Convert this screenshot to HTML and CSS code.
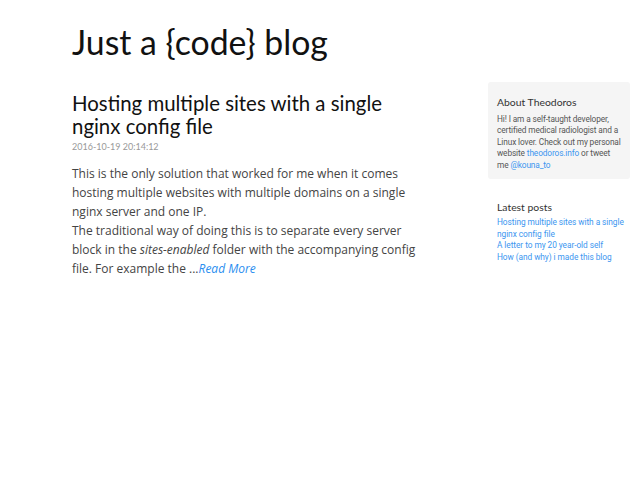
FILE: index.html
```html
<!DOCTYPE html>
<html>
<head>
<meta charset="utf-8">
<link rel="stylesheet" href="styles.css">
</head>
<body>
<div class="page">
  <header class="site-header">
    <h1 class="site-title">Just a {code} blog</h1>
  </header>
  <div class="layout">
    <main class="main">
      <article class="post">
        <h2 class="post-title">Hosting multiple sites with a single nginx config file</h2>
        <div class="post-date">2016-10-19 20:14:12</div>
        <p class="post-excerpt">This is the only solution that worked for me when it comes hosting multiple websites with multiple domains on a single nginx server and one IP.<br>The traditional way of doing this is to separate every server block in the <em>sites-enabled</em> folder with the accompanying config file. For example the ...<a class="read-more" href="#">Read More</a></p>
      </article>
    </main>
    <aside class="sidebar">
      <section class="about">
        <h4 class="side-heading">About Theodoros</h4>
        <p class="about-text">Hi! I am a self-taught developer, certified medical radiologist and a Linux lover. Check out my personal website <a href="#">theodoros.info</a> or tweet me&nbsp;<a href="#">@kouna_to</a></p>
      </section>
      <section class="latest">
        <h4 class="side-heading">Latest posts</h4>
        <ul class="latest-list">
          <li><a href="#">Hosting multiple sites with a single nginx config file</a></li>
          <li><a href="#">A letter to my 20 year-old self</a></li>
          <li><a href="#">How (and why) i made this blog</a></li>
        </ul>
      </section>
    </aside>
  </div>
</div>
</body>
</html>
```

FILE: styles.css
```css
html, body {
  margin: 0;
  padding: 0;
  background: #fff;
}
.page {
  padding: 0 10px 0 72px;
}
.site-header {
  padding-top: 20px;
}
.site-title {
  margin: 0;
  font-family: Lato, "Liberation Sans", sans-serif;
  font-weight: 400;
  font-size: 33.8px;
  line-height: 44px;
  color: #111;
}
.layout {
  display: flex;
  margin-top: 18px;
}
.main {
  width: 356px;
  flex: none;
  padding-top: 10px;
}
.post-title {
  margin: 0;
  font-family: Lato, "Liberation Sans", sans-serif;
  font-weight: 400;
  font-size: 20.4px;
  line-height: 23px;
  color: #111;
}
.post-date {
  margin-top: 3px;
  font-family: Lato, "Liberation Sans", sans-serif;
  font-size: 9px;
  line-height: 12px;
  color: #999;
}
.post-excerpt {
  margin: 11px 0 0;
  font-family: "Open Sans", "Liberation Sans", sans-serif;
  font-size: 12px;
  line-height: 19px;
  color: #444;
}
.post-excerpt em {
  font-style: italic;
}
.read-more {
  color: #2a8ef0;
  font-style: italic;
  text-decoration: none;
}
.sidebar {
  margin-left: 60px;
  width: 142px;
  flex: none;
}
.about {
  background: #f5f5f5;
  border-radius: 3px;
  padding: 13px 5px 8px 9px;
}
.side-heading {
  margin: 0 0 5px;
  font-family: Lato, "Liberation Sans", sans-serif;
  font-weight: 400;
  font-size: 10.4px;
  line-height: 14px;
  color: #333;
}
.about-text {
  margin: 0;
  font-family: Roboto, "Liberation Sans", sans-serif;
  font-size: 8.3px;
  letter-spacing: -0.12px;
  line-height: 11.4px;
  color: #555;
}
.sidebar a {
  color: #3b96f0;
  text-decoration: none;
}
.latest {
  padding: 21px 2px 0 9px;
}
.latest .side-heading {
  margin-bottom: 3px;
}
.latest-list {
  list-style: none;
  margin: 0;
  padding: 0;
  font-family: Roboto, "Liberation Sans", sans-serif;
  font-size: 8.3px;
  letter-spacing: -0.05px;
  line-height: 11.6px;
}
```
